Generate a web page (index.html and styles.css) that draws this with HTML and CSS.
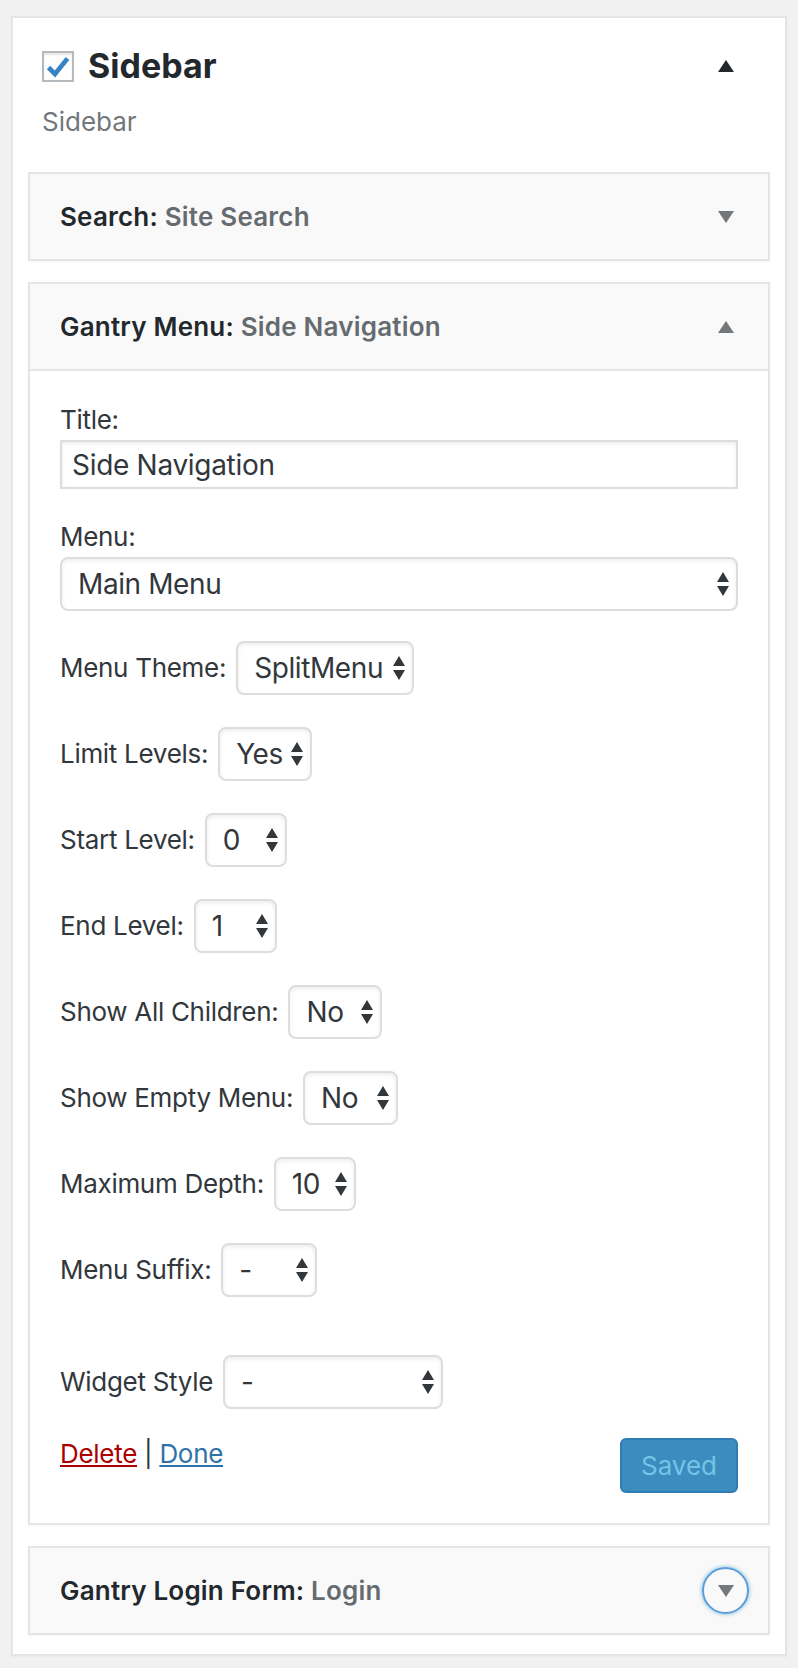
FILE: index.html
```html
<!DOCTYPE html>
<html lang="en">
<head>
<meta charset="utf-8">
<title>Sidebar widgets</title>
<link rel="stylesheet" href="styles.css">
</head>
<body>
<div class="page">
  <section class="sidebar-panel">
    <div class="sidebar-head">
      <span class="checkbox">
        <svg viewBox="0 0 28 27" width="28" height="27" aria-hidden="true"><path d="M4.5 14.5 L11 21 L23.5 5.5" fill="none" stroke="#3582c4" stroke-width="4.6" stroke-linejoin="miter"/></svg>
      </span>
      <h2 class="sidebar-title">Sidebar</h2>
      <span class="toggle"><span class="tri tri-up tri-dark"></span></span>
    </div>
    <p class="sidebar-desc">Sidebar</p>

    <div class="widget-list">
      <div class="widget">
        <div class="widget-top">
          <h3 class="widget-title">Search: <span class="in-title">Site Search</span></h3>
          <span class="toggle"><span class="tri tri-down"></span></span>
        </div>
      </div>

      <div class="widget">
        <div class="widget-top">
          <h3 class="widget-title">Gantry Menu: <span class="in-title">Side Navigation</span></h3>
          <span class="toggle"><span class="tri tri-up"></span></span>
        </div>
        <div class="widget-inside">
          <div class="field-block">
            <label class="field-label" for="title">Title:</label>
            <input class="text-input" id="title" type="text" value="Side Navigation">
          </div>
          <div class="field-block gap-30">
            <label class="field-label" for="menu">Menu:</label>
            <span class="select-wrap sel-full"><select id="menu"><option>Main Menu</option></select></span>
          </div>

          <div class="field-row gap-30">
            <label class="field-label">Menu Theme:</label>
            <span class="select-wrap sel-theme"><select><option>SplitMenu</option></select></span>
          </div>
          <div class="field-row gap-32">
            <label class="field-label">Limit Levels:</label>
            <span class="select-wrap sel-limit"><select><option>Yes</option></select></span>
          </div>
          <div class="field-row gap-32">
            <label class="field-label">Start Level:</label>
            <span class="select-wrap sel-start"><select><option>0</option></select></span>
          </div>
          <div class="field-row gap-32">
            <label class="field-label">End Level:</label>
            <span class="select-wrap sel-end"><select><option>1</option></select></span>
          </div>
          <div class="field-row gap-32">
            <label class="field-label">Show All Children:</label>
            <span class="select-wrap sel-children"><select><option>No</option></select></span>
          </div>
          <div class="field-row gap-32">
            <label class="field-label">Show Empty Menu:</label>
            <span class="select-wrap sel-empty"><select><option>No</option></select></span>
          </div>
          <div class="field-row gap-32">
            <label class="field-label">Maximum Depth:</label>
            <span class="select-wrap sel-depth"><select><option>10</option></select></span>
          </div>
          <div class="field-row gap-32">
            <label class="field-label">Menu Suffix:</label>
            <span class="select-wrap sel-suffix"><select><option>-</option></select></span>
          </div>
          <div class="field-row gap-58">
            <label class="field-label">Widget Style</label>
            <span class="select-wrap sel-style"><select><option>-</option></select></span>
          </div>

          <div class="widget-actions">
            <div class="action-links"><a class="link-delete" href="#">Delete</a> <span class="sep">|</span> <a class="link-done" href="#">Done</a></div>
            <button class="btn-saved" type="button" disabled>Saved</button>
          </div>
        </div>
      </div>

      <div class="widget">
        <div class="widget-top">
          <h3 class="widget-title">Gantry Login Form: <span class="in-title">Login</span></h3>
          <span class="toggle toggle-focus"><span class="tri tri-down"></span></span>
        </div>
      </div>
    </div>
  </section>
</div>
</body>
</html>
```

FILE: styles.css
```css
* { box-sizing: border-box; }

html, body {
  margin: 0;
  padding: 0;
  background: #f1f1f1;
}

body {
  font-family: Inter, "Open Sans", "Liberation Sans", sans-serif;
  color: #32373c;
}

.page {
  padding: 16px 11px 12px;
}

.sidebar-panel {
  background: #fff;
  border: 2px solid #e5e5e5;
  box-shadow: 0 1px 2px rgba(0,0,0,.04);
  padding: 0 15px 19px;
}

.sidebar-head {
  display: flex;
  align-items: center;
  height: 40px;
  margin-top: 28px;
  padding-left: 14px;
  padding-right: 21px;
}

.checkbox {
  width: 32px;
  height: 31px;
  border: 2px solid #b4b9be;
  background: #fff;
  box-shadow: inset 0 2px 2px rgba(0,0,0,.1);
  display: flex;
  align-items: center;
  justify-content: center;
  flex: none;
}

.sidebar-title {
  margin: 0 0 0 14px;
  font-size: 34px;
  line-height: 40px;
  font-weight: 700;
  color: #23282d;
}

.toggle {
  margin-left: auto;
  width: 47px;
  height: 47px;
  flex: none;
  display: flex;
  align-items: center;
  justify-content: center;
  border-radius: 50%;
}

.toggle-focus {
  border: 2px solid #5b9dd9;
  box-shadow: 0 0 4px rgba(30,140,190,.6);
}

.tri {
  width: 0;
  height: 0;
  border-left: 8px solid transparent;
  border-right: 8px solid transparent;
}

.tri-up { border-bottom: 12px solid #72777c; }
.tri-down { border-top: 12px solid #72777c; }
.tri-up.tri-dark { border-bottom-color: #23282d; }

.sidebar-desc {
  margin: 18px 0 0 14px;
  font-size: 26px;
  line-height: 36px;
  color: #72777c;
}

.widget-list {
  margin-top: 32px;
  display: flex;
  flex-direction: column;
  gap: 21px;
}

.widget {
  border: 2px solid #e5e5e5;
  background: #fff;
  box-shadow: 0 1px 2px rgba(0,0,0,.04);
}

.widget-top {
  height: 85px;
  background: #f9f9f9;
  display: flex;
  align-items: center;
  padding-left: 30px;
  padding-right: 19px;
}

.widget-title {
  margin: 0;
  font-size: 26px;
  line-height: 36px;
  font-weight: 600;
  letter-spacing: 0.2px;
  color: #23282d;
}

.in-title {
  color: #666b70;
}

.widget-inside {
  border-top: 2px solid #e5e5e5;
  padding: 31px 30px 30px;
}

.field-block {
  display: flex;
  flex-direction: column;
}

.field-label {
  font-size: 26px;
  line-height: 36px;
  letter-spacing: -0.3px;
  color: #32373c;
}

.field-block .field-label {
  margin-bottom: 2px;
}

.text-input {
  height: 49px;
  width: 100%;
  border: 2px solid #ddd;
  border-radius: 0;
  box-shadow: inset 0 2px 4px rgba(0,0,0,.07);
  padding: 0 10px;
  font-family: inherit;
  font-size: 28px;
  letter-spacing: -0.3px;
  color: #32373c;
  background: #fff;
  outline: none;
}

.gap-30 { margin-top: 30px; }
.gap-32 { margin-top: 32px; }
.gap-58 { margin-top: 58px; }

.field-row {
  display: flex;
  align-items: center;
  gap: 10px;
}

.select-wrap {
  position: relative;
  display: inline-block;
  height: 54px;
  flex: none;
}

.select-wrap select {
  -webkit-appearance: none;
  appearance: none;
  width: 100%;
  height: 54px;
  border: 2px solid #ddd;
  border-radius: 8px;
  box-shadow: inset 0 2px 4px rgba(0,0,0,.07);
  background: #fff;
  padding: 0 20px 0 16px;
  font-family: inherit;
  font-size: 28px;
  letter-spacing: -0.4px;
  color: #32373c;
  outline: none;
}

.select-wrap::before,
.select-wrap::after {
  content: "";
  position: absolute;
  right: 9px;
  width: 0;
  height: 0;
  border-left: 6.5px solid transparent;
  border-right: 6.5px solid transparent;
  pointer-events: none;
}

.select-wrap::before {
  top: calc(50% - 12px);
  border-bottom: 10px solid #32373c;
}

.select-wrap::after {
  top: calc(50% + 2px);
  border-top: 10px solid #32373c;
}

.sel-full { display: block; width: 100%; }
.sel-theme { width: 178px; }
.sel-limit { width: 94px; }
.sel-start { width: 82px; }
.sel-end { width: 83px; }
.sel-children { width: 94px; }
.sel-empty { width: 95px; }
.sel-depth { width: 82px; }
.sel-suffix { width: 96px; }
.sel-style { width: 220px; }

.widget-actions {
  margin-top: 29px;
  display: flex;
  justify-content: space-between;
  align-items: flex-start;
}

.action-links {
  margin-top: -2px;
  font-size: 26px;
  line-height: 36px;
  letter-spacing: -0.3px;
  color: #32373c;
}

.sep { color: #32373c; }

.link-delete { color: #a00; }
.link-done { color: #2e72aa; }

.btn-saved {
  width: 118px;
  height: 55px;
  border: 2px solid #2f7db3;
  border-radius: 6px;
  background: #3c8cc0;
  color: #74c4e6;
  font-family: inherit;
  font-size: 26px;
  padding: 0;
}
```
